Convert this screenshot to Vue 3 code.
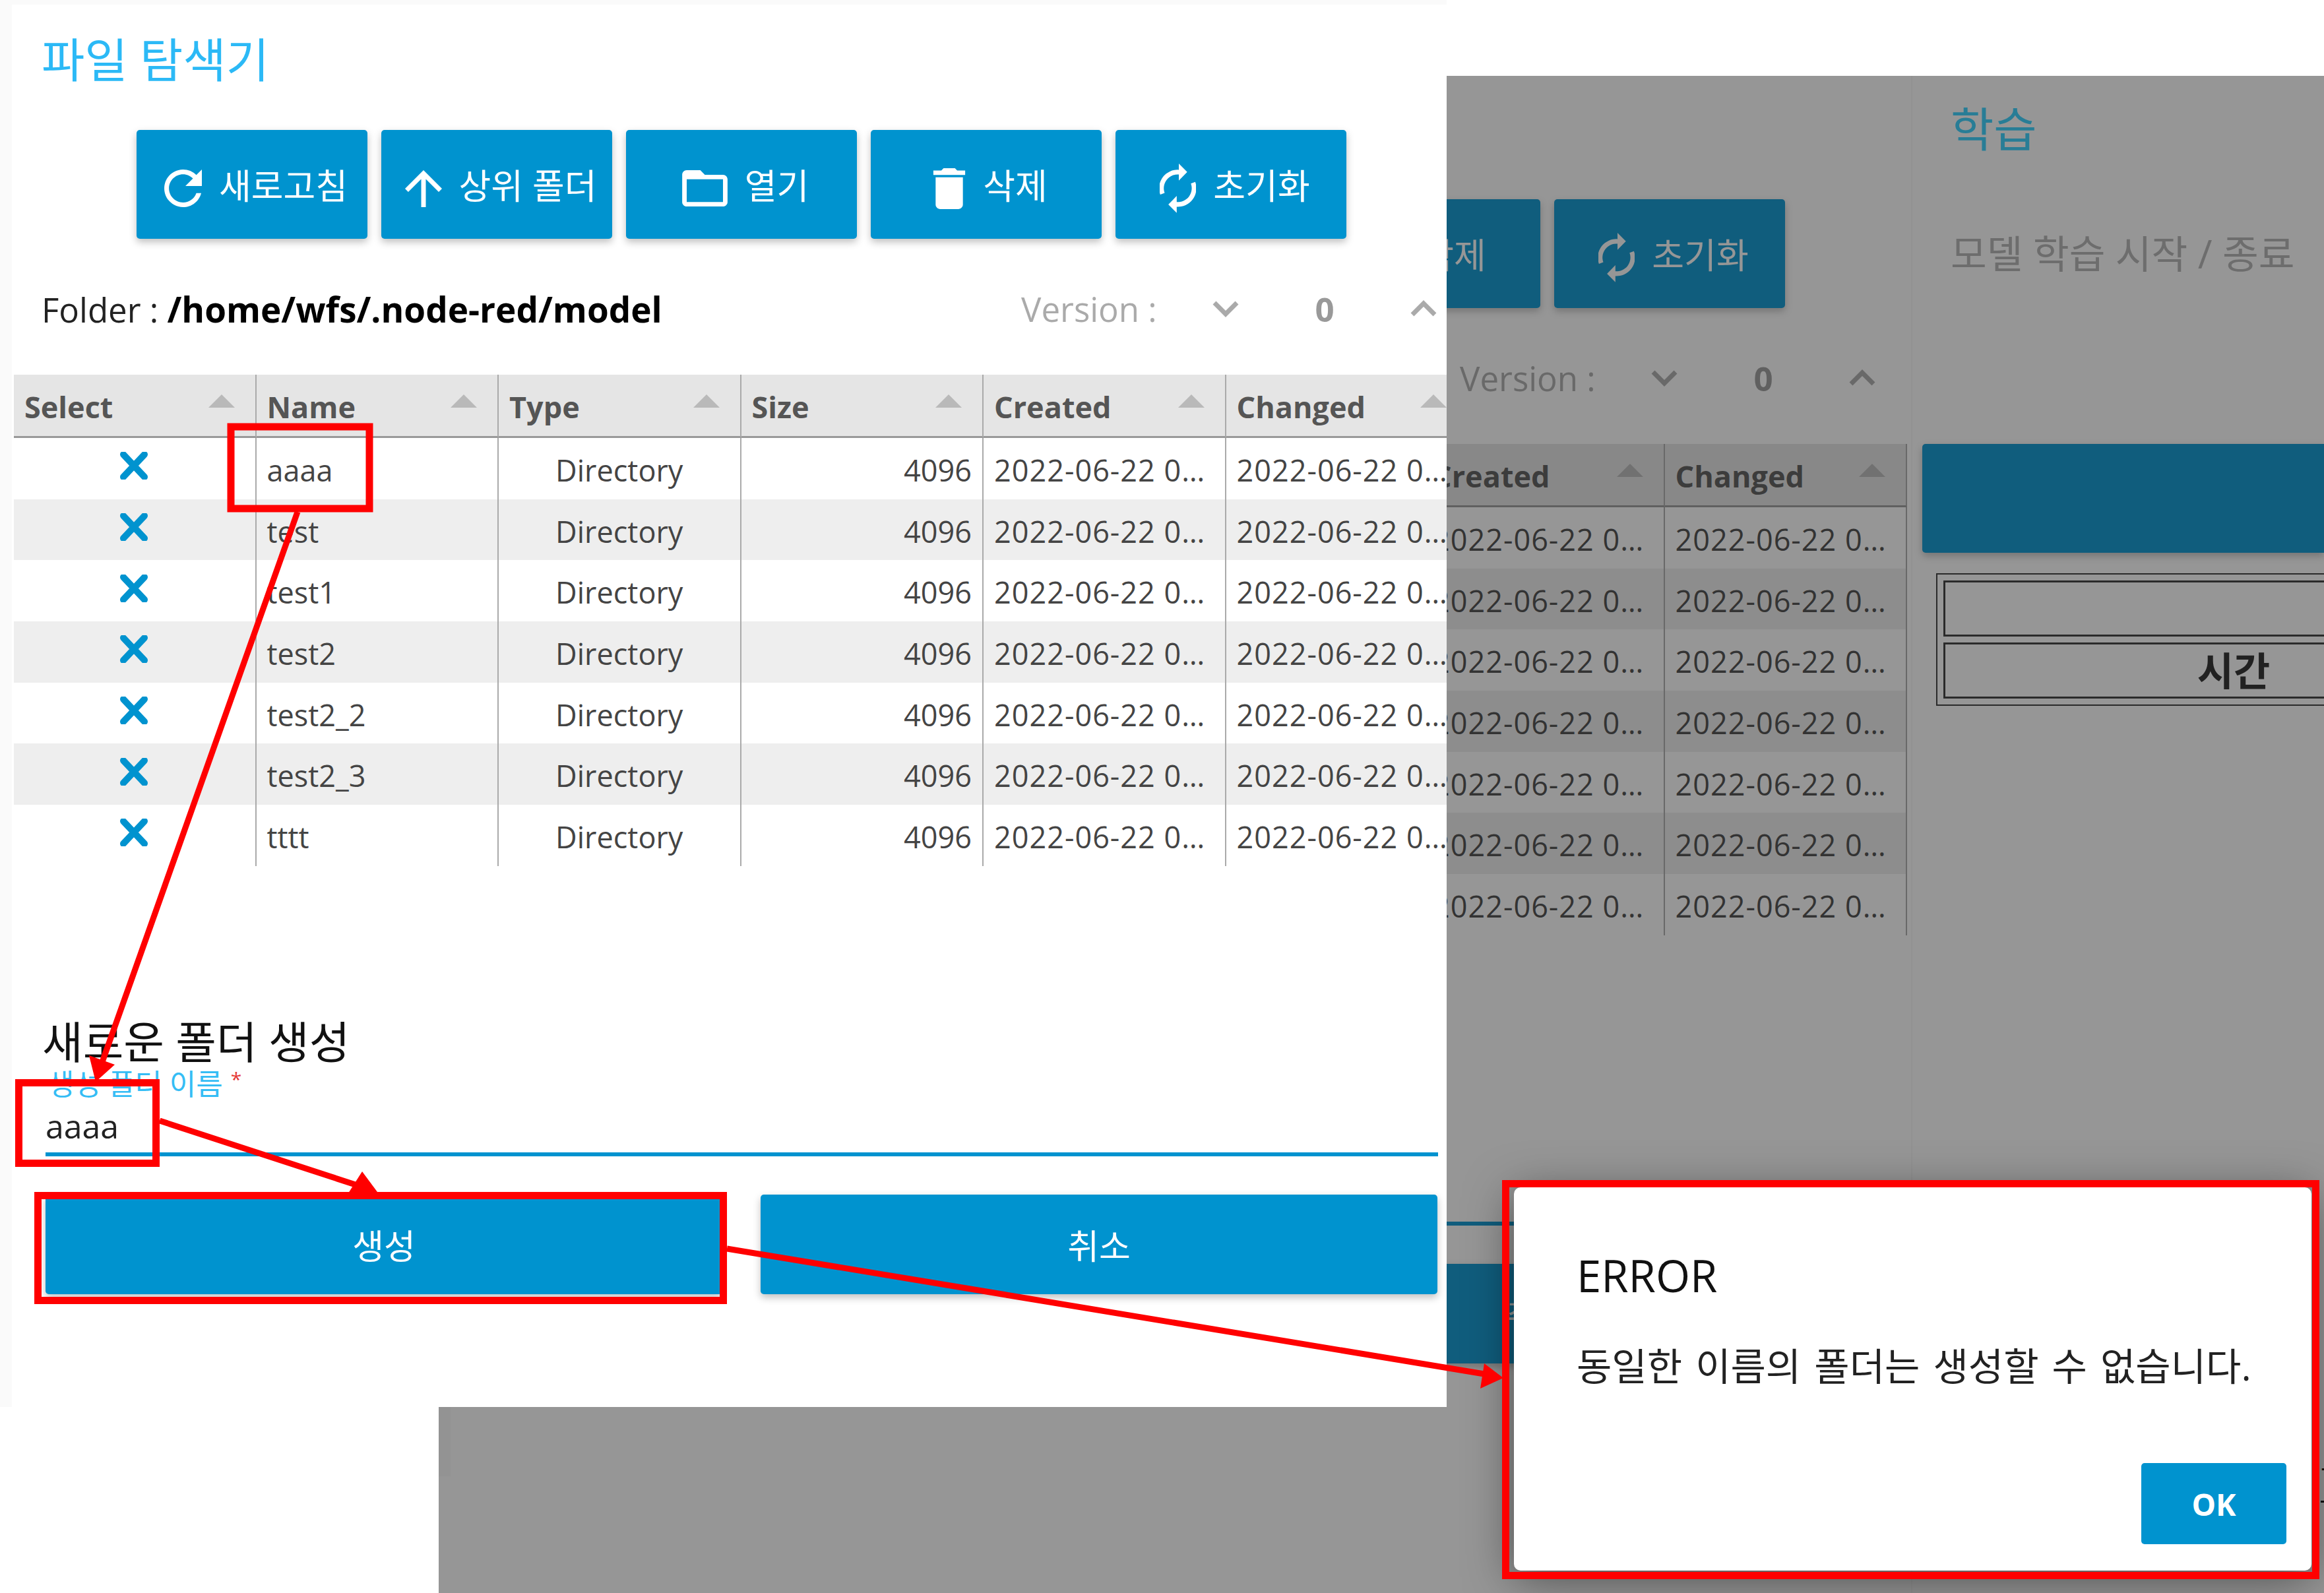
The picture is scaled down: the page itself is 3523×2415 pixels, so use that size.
<template>
  <div class="collage">
    <section v-for="win in windows" :key="win" class="window" :class="win">
      <div class="explorer">
        <h1 class="title">파일 탐색기</h1>

        <div class="toolbar">
          <button v-for="tool in tools" :key="tool.label" class="tool">
            <svg :viewBox="tool.box" :width="tool.w" :height="tool.h" fill="#fff">
              <path :d="tool.d" />
            </svg>
            <span>{{ tool.label }}</span>
          </button>
        </div>

        <div class="folder-row">
          <div class="folder">Folder : <b>/home/wfs/.node-red/model</b></div>
          <div class="version">
            <span>Version :</span>
            <svg viewBox="0 0 42 26" width="42" height="26"><path d="M4 4l17 17L38 4" /></svg>
            <b>0</b>
            <svg viewBox="0 0 42 26" width="42" height="26"><path d="M4 22L21 5l17 17" /></svg>
          </div>
        </div>

        <table class="files">
          <thead>
            <tr>
              <th v-for="col in columns" :key="col">{{ col }}<i class="sort"></i></th>
            </tr>
          </thead>
          <tbody>
            <tr v-for="name in folders" :key="name">
              <td>
                <svg class="del" viewBox="0 0 42 42" width="42" height="42">
                  <path d="M5 4l32 34M37 4L5 38" />
                </svg>
              </td>
              <td>{{ name }}</td>
              <td class="center">Directory</td>
              <td class="right">4096</td>
              <td class="date">{{ stamp }}</td>
              <td class="date">{{ stamp }}</td>
            </tr>
          </tbody>
        </table>

        <div class="create">
          <h2>새로운 폴더 생성</h2>
          <label>생성 폴더 이름<em>*</em></label>
          <div class="field">aaaa</div>
          <div class="actions">
            <button>생성</button>
            <button>취소</button>
          </div>
        </div>
      </div>

      <aside v-if="win === 'back'" class="train">
        <h1 class="title">학습</h1>
        <p>모델 학습 시작 / 종료</p>
        <button class="train-btn"></button>
        <div class="log">
          <div></div>
          <div><b>시간</b></div>
        </div>
        <span class="stub">7</span>
      </aside>

      <div v-if="win === 'back'" class="dim"></div>
    </section>

    <div class="dialog">
      <h3>ERROR</h3>
      <p>동일한 이름의 폴더는 생성할 수 없습니다.</p>
      <button>OK</button>
    </div>

    <!-- 빨간 표시 -->
    <svg class="marks" viewBox="0 0 3523 2415" width="3523" height="2415">
      <rect x="350" y="647" width="210" height="124" />
      <rect x="28.5" y="1641.5" width="208" height="122" />
      <rect x="57.5" y="1812.5" width="1039" height="159" />
      <rect x="2282.5" y="1794.5" width="1228" height="594" />
      <line x1="451" y1="776" x2="155" y2="1610" />
      <line x1="242" y1="1699" x2="545" y2="1798" />
      <line x1="1102" y1="1893" x2="2250" y2="2083" />
      <polygon points="145,1640 135,1600 174,1614" />
      <polygon points="572,1807 526,1812 549,1776" />
      <polygon points="2279,2089 2244,2105 2250,2067" />
    </svg>
  </div>
</template>

<script setup>
const windows = ['back', 'front']

const tools = [
  {
    label: '새로고침', box: '4 4 16 16', w: 57, h: 57,
    d: 'M17.65 6.35A7.958 7.958 0 0 0 12 4c-4.42 0-7.99 3.58-7.99 8s3.57 8 7.99 8c3.73 0 6.84-2.55 7.73-6h-2.08A5.99 5.99 0 0 1 12 18c-3.31 0-6-2.69-6-6s2.69-6 6-6c1.66 0 3.14.69 4.22 1.78L13 11h7V4l-2.35 2.35z'
  },
  {
    label: '상위 폴더', box: '4 4 16 16', w: 56, h: 56,
    d: 'M4 12l1.41 1.41L11 7.83V20h2V7.83l5.58 5.59L20 12l-8-8-8 8z'
  },
  {
    label: '열기', box: '2 4 20 16', w: 69, h: 55,
    d: 'M20 6h-8l-2-2H4c-1.1 0-1.99.9-1.99 2L2 18c0 1.1.9 2 2 2h16c1.1 0 2-.9 2-2V8c0-1.1-.9-2-2-2zm0 12H4V8h16v10z'
  },
  {
    label: '삭제', box: '5 3 14 18', w: 50, h: 62,
    d: 'M6 19c0 1.1.9 2 2 2h8c1.1 0 2-.9 2-2V7H6v12zM19 4h-3.5l-1-1h-5l-1 1H5v2h14V4z'
  },
  {
    label: '초기화', box: '0 0 55 75', w: 55, h: 75,
    d: 'M29 9.4A28 28 0 0 0 .9 47L7.5 44.6A21 21 0 0 1 29 16.5ZM29 0L41.7 12.7 29 25.7ZM25.8 65.4A28 28 0 0 0 53.9 27.8L47.3 30.2A21 21 0 0 1 25.8 58.3ZM25.8 74.8L13.1 62.1 25.8 49.1Z'
  }
]

const columns = ['Select', 'Name', 'Type', 'Size', 'Created', 'Changed']
const folders = ['aaaa', 'test', 'test1', 'test2', 'test2_2', 'test2_3', 'tttt']
const stamp = '2022-06-22 09:41:17'
</script>

<style>
html, body {
  margin: 0;
  overflow: hidden;
  background: #fff;
}
</style>

<style scoped>
.collage {
  position: relative;
  width: 3523px;
  height: 2415px;
  overflow: hidden;
  background: #fff;
  font-family: "Open Sans", "Noto Sans CJK KR", sans-serif;
  color: #444;
}

.window {
  position: absolute;
  display: flex;
  overflow: hidden;
  background: #fff;
}
.window.back {
  left: 665px;
  top: 115px;
  right: 0;
  bottom: 0;
}
.window.back .explorer {
  margin-top: -10px;
}
.window.front {
  left: 0;
  top: 0;
  width: 2193px;
  height: 2133px;
}

.dim {
  position: absolute;
  inset: 0;
  background: rgba(34, 34, 34, 0.475);
}

.explorer {
  flex: none;
  box-sizing: border-box;
  width: 2232px;
  height: 2133px;
  border-left: 18px solid #fafafa;
  border-top: 7px solid #fafafa;
}

.title {
  margin: 0 0 0 45px;
  height: 166px;
  line-height: 166px;
  font-size: 71px;
  font-weight: 400;
  color: #2bb9f6;
}

.toolbar {
  display: flex;
  gap: 21px;
  margin: 24px 0 0 189px;
}
button {
  border: 0;
  border-radius: 5px;
  background: #0093cf;
  color: #fff;
  font-family: inherit;
  box-shadow: 0 5px 12px rgba(0, 0, 0, 0.25);
}
.tool {
  display: flex;
  align-items: center;
  justify-content: center;
  gap: 26px;
  width: 350px;
  height: 165px;
  padding: 0 0 0 12px;
  font-size: 53px;
}
.tool svg {
  flex: none;
  margin-top: 12px;
}

.folder-row {
  display: flex;
  align-items: center;
  justify-content: space-between;
  height: 100px;
  margin: 56px 24px 0 45px;
  font-size: 51px;
  color: #222;
}
.folder b {
  font-size: 53px;
  color: #000;
}
.version {
  display: grid;
  grid-template-columns: 210px 100px 100px 100px;
  column-gap: 50px;
  align-items: center;
  justify-items: center;
  color: #aaa;
}
.version span {
  justify-self: start;
}
.version b {
  color: #999;
}
.version path {
  fill: none;
  stroke: #aaa;
  stroke-width: 7;
}

.files {
  table-layout: fixed;
  border-collapse: separate;
  border-spacing: 0;
  width: 2205px;
  margin: 50px 0 0 3px;
  font-size: 45px;
}
.files th {
  position: relative;
  height: 96px;
  padding: 3px 0 0 16px;
  box-sizing: border-box;
  background: #e5e5e5;
  border-right: 2px solid #aaa;
  border-bottom: 3px solid #999;
  text-align: left;
  font-weight: 700;
  color: #555;
}
.sort {
  position: absolute;
  right: 31px;
  top: 30px;
  border-left: 20px solid transparent;
  border-right: 20px solid transparent;
  border-bottom: 20px solid #b9b9b9;
}
.files td {
  height: 92.7px;
  padding: 4px 16px 0;
  box-sizing: border-box;
  border-right: 2px solid #aaa;
  white-space: nowrap;
  overflow: hidden;
  text-overflow: ellipsis;
}
.files td.date {
  padding-right: 20px;
  letter-spacing: 1px;
}
.files tbody tr:nth-child(even) td {
  background: #eee;
}
.center {
  text-align: center;
}
.right {
  text-align: right;
}
.del {
  display: block;
  margin: -12px auto 0;
  transform: translateX(-1px);
}
.del path {
  fill: none;
  stroke: #0093cf;
  stroke-width: 10;
  stroke-linecap: round;
}

.create {
  margin: 231px 0 0 46px;
}
.create h2 {
  margin: 0;
  height: 74px;
  line-height: 70px;
  font-size: 67px;
  font-weight: 400;
  color: #111;
}
.create label {
  display: flex;
  height: 50px;
  line-height: 50px;
  margin-left: 8px;
  font-size: 44px;
  color: #35bdf5;
}
.create em {
  margin-left: 12px;
  font-size: 30px;
  line-height: 36px;
  font-style: normal;
  color: #e53935;
}
.field {
  height: 79px;
  line-height: 79px;
  margin-left: 5px;
  border-bottom: 6px solid #0093cf;
  width: 2111px;
  font-size: 50px;
  color: #222;
}
.actions {
  display: flex;
  gap: 58px;
  width: 2110px;
  margin: 58px 0 0 5px;
}
.actions button {
  flex: 1;
  height: 151px;
  font-size: 52px;
}

.train {
  position: relative;
  flex: 1;
  min-width: 0;
  padding-left: 15px;
  border-left: 2px solid #f8f8f8;
}
.train .title {
  margin: 0 0 0 43px;
  height: 156px;
  line-height: 160px;
  color: #2fd0ff;
}
.train p {
  margin: 73px 0 0 43px;
  font-size: 59.5px;
  line-height: 80px;
  color: #b2b2b2;
}
.train-btn {
  display: block;
  width: 100%;
  height: 165px;
  margin-top: 249px;
  border-radius: 5px 0 0 5px;
}
.log {
  width: 880px;
  margin: 31px 0 0 21px;
  padding: 9px;
  border: 2px solid #333;
  color: #222;
}
.log div {
  box-sizing: border-box;
  height: 85px;
  line-height: 80px;
  border: 3px solid #333;
  text-align: center;
  font-size: 60px;
}
.log div + div {
  margin-top: 9px;
}
/* 대화상자 오른쪽으로 살짝 보이는 뒤쪽 내용 */
.stub {
  position: absolute;
  left: 619px;
  top: 2110px;
  width: 40px;
  height: 50px;
  border-bottom: 3px solid #000;
  font-size: 40px;
  line-height: 30px;
  color: #000;
}

.dialog {
  position: absolute;
  left: 2295px;
  top: 1800px;
  width: 1209px;
  height: 581px;
  box-sizing: border-box;
  padding: 98px 0 0 95px;
  background: #fff;
  border-radius: 10px;
  box-shadow: 0 12px 70px rgba(0, 0, 0, 0.5);
}
.dialog h3 {
  margin: 0;
  font-size: 67px;
  font-weight: 500;
  line-height: 70px;
  color: #111;
}
.dialog p {
  margin: 63px 0 0;
  font-size: 58px;
  word-spacing: 5px;
  line-height: 80px;
  color: #222;
}
.dialog button {
  position: absolute;
  right: 38px;
  bottom: 40px;
  width: 220px;
  height: 123px;
  font-size: 46px;
  font-weight: 700;
  box-shadow: none;
}

.marks {
  position: absolute;
  left: 0;
  top: 0;
  pointer-events: none;
}
.marks rect {
  fill: none;
  stroke: #f00;
  stroke-width: 11;
}
.marks line {
  stroke: #f00;
  stroke-width: 9;
}
.marks polygon {
  fill: #f00;
}
</style>
